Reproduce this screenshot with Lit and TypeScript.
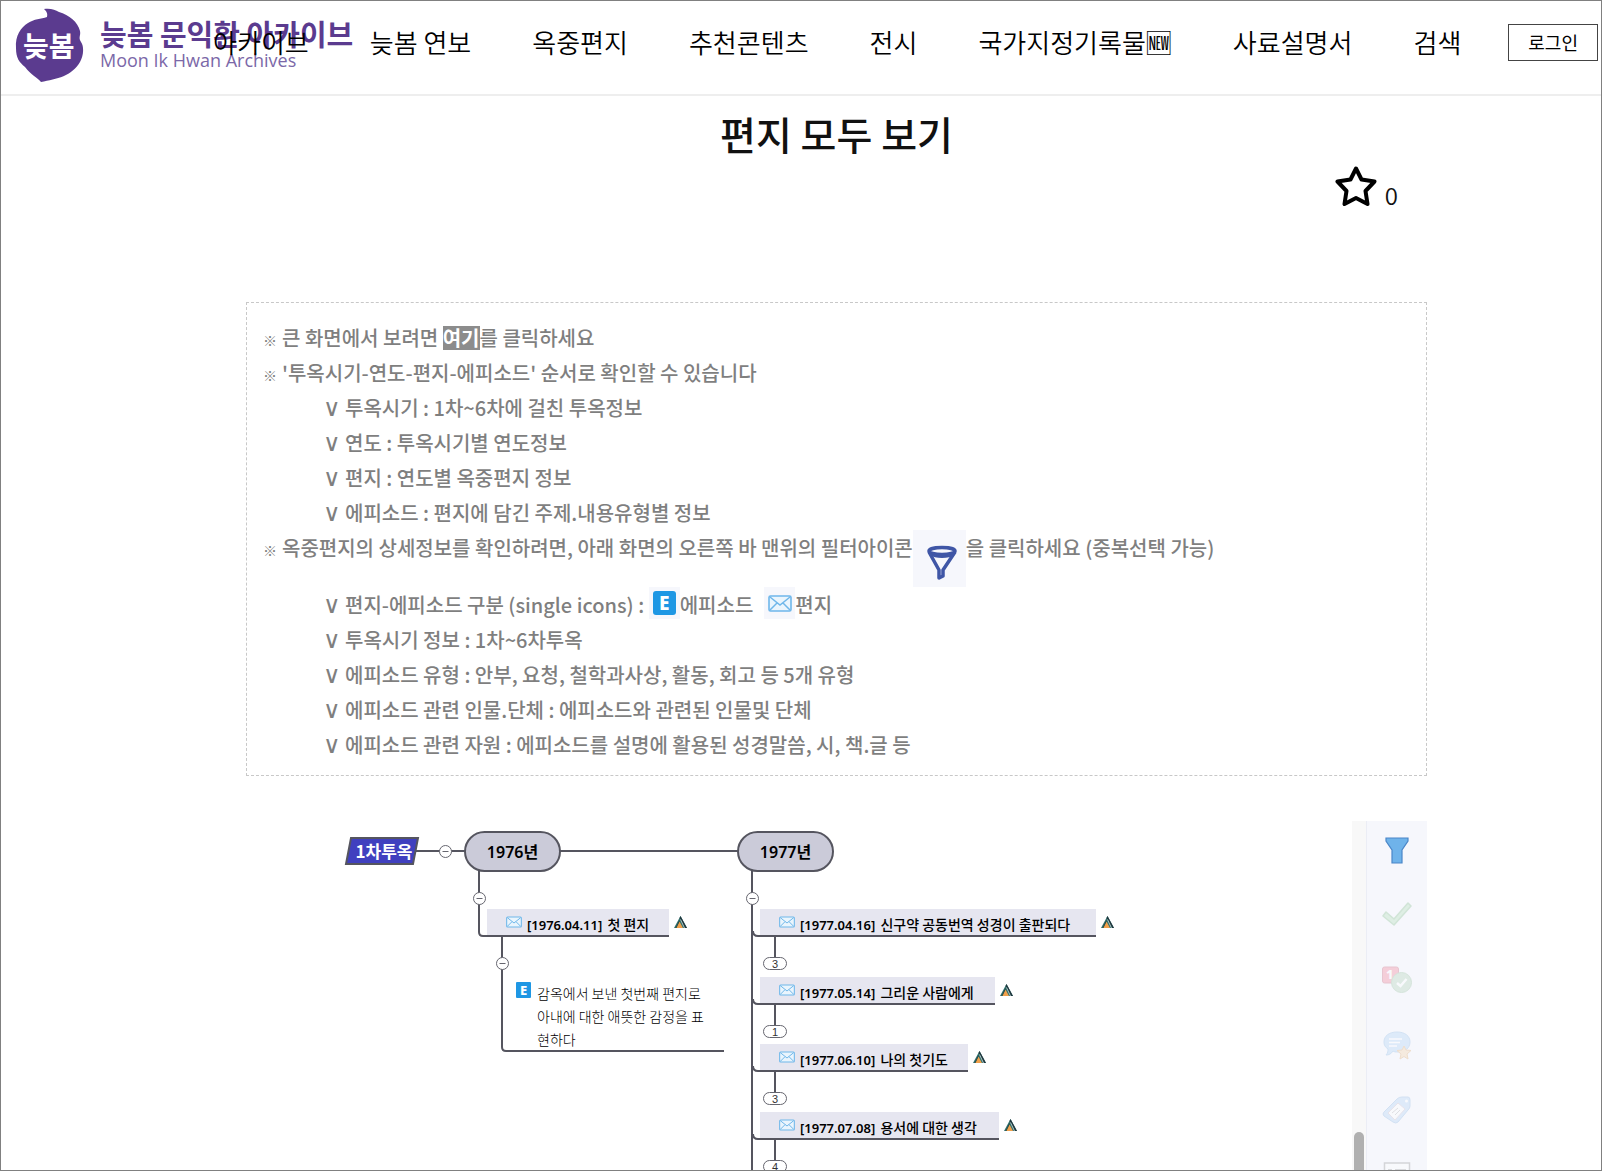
import { LitElement, html, css, svg } from "lit";
import { customElement, property } from "lit/decorators.js";
import { styleMap } from "lit/directives/style-map.js";

interface Letter {
  x: number;
  y: number;
  width: number;
  date: string;
  title: string;
  count?: number;
}

const MENU = ["아카이브", "늦봄 연보", "옥중편지", "추천콘텐츠", "전시", "국가지정기록물🆕", "사료설명서", "검색"];

const LETTERS: Letter[] = [
  { x: 241, y: 88, width: 182, date: "[1976.04.11]", title: "첫 편지" },
  { x: 514, y: 88, width: 336, date: "[1977.04.16]", title: "신구약 공동번역 성경이 출판되다", count: 3 },
  { x: 514, y: 156, width: 235, date: "[1977.05.14]", title: "그리운 사람에게", count: 1 },
  { x: 514, y: 223, width: 208, date: "[1977.06.10]", title: "나의 첫기도", count: 3 },
  { x: 514, y: 291, width: 239, date: "[1977.07.08]", title: "용서에 대한 생각", count: 4 },
];

const at = (x: number, y: number, width?: number) =>
  styleMap({ left: `${x}px`, top: `${y}px`, ...(width ? { width: `${width}px` } : {}) });

const envelope = html`<svg class="envelope" viewBox="0 0 24 17" aria-hidden="true">
  <rect x="1" y="1" width="22" height="15" rx="1.5" fill="#eaf5fd" stroke="#6fb7ea" stroke-width="1.6" />
  <path d="M2 2l10 8 10-8M2 15l7-7M22 15l-7-7" fill="none" stroke="#6fb7ea" stroke-width="1.5" />
</svg>`;

const letterE = html`<span class="e-tile">E</span>`;

const peaks = html`<svg class="peaks" viewBox="0 0 13 12" aria-hidden="true">
  <path d="M6.5 0L13 12H0z" fill="#2f6f6c" />
  <path d="M6.5 0L13 12h-2.500L5.500 2z" fill="#20383f" />
  <path d="M5.500 5.500L9 12H2z" fill="#f0a04b" />
  <path d="M6.500 3.500L10.500 12" stroke="#cfe3df" stroke-width=".8" fill="none" />
  <path d="M5.500 4.500L2 12" stroke="#244" stroke-width=".9" fill="none" />
</svg>`;

@customElement("site-header")
export class SiteHeader extends LitElement {
  static styles = css`
    :host {
      display: block;
      border-bottom: 2px solid #eeeeee;
    }
    .bar {
      display: grid;
      align-items: center;
      min-height: 83px;
      padding-bottom: 10px;
    }
    .logo,
    .nav {
      grid-area: 1 / 1;
    }
    .logo {
      display: flex;
      align-items: center;
      gap: 16px;
      padding: 4px 0 0 13px;
      justify-self: start;
      color: #5b3b8f;
      text-decoration: none;
    }
    .drop {
      width: 70px;
      height: 74px;
    }
    .drop-text {
      font-size: 28px;
      font-weight: 700;
      fill: #ffffff;
    }
    .words {
      display: flex;
      flex-direction: column;
    }
    .name {
      font-size: 29px;
      font-weight: 700;
      line-height: 30px;
    }
    .latin {
      font-family: "Open Sans", "Noto Sans", sans-serif;
      font-size: 18px;
      line-height: 24px;
      color: #7b68a8;
    }
    .nav {
      display: flex;
      align-items: center;
      justify-content: flex-end;
      padding-right: 3px;
    }
    .menu {
      display: flex;
      gap: 61px;
      margin: 0 47px 0 0;
      padding: 0 0 2px;
      list-style: none;
    }
    .menu-link {
      color: #000000;
      font-size: 26px;
      font-weight: 350;
      line-height: 36px;
      text-decoration: none;
      white-space: nowrap;
    }
    .login {
      padding: 0 19px;
      border: 1px solid #444444;
      background: #ffffff;
      color: #000000;
      font: inherit;
      font-size: 18px;
      line-height: 35px;
      white-space: nowrap;
    }
  `;

  render() {
    return html`<header class="bar">
      <a class="logo" href="#home" aria-label="늦봄 문익환 아카이브">
        <svg class="drop" viewBox="0 0 70 74">
          <path
            d="M33 9C34 5 32 3 30 1C37 0 41 2 45 4C55 7 64 14 66 23C67 28 64 29 67 34C70 38 70 47 66 54C58 68 43 71 27 74C23 69 17 67 11 59C5 54 2 50 2 40C1 28 7 19 14 15C20 11 27 11 33 9z"
            fill="#5b3b8f"
          />
          <text class="drop-text" x="9" y="49">늦봄</text>
        </svg>
        <span class="words">
          <span class="name">늦봄 문익환 아카이브</span>
          <span class="latin">Moon Ik Hwan Archives</span>
        </span>
      </a>
      <nav class="nav">
        <ul class="menu">
          ${MENU.map((label) => html`<li><a class="menu-link" href="#menu">${label}</a></li>`)}
        </ul>
        <button class="login" type="button">로그인</button>
      </nav>
    </header>`;
  }
}

@customElement("guide-box")
export class GuideBox extends LitElement {
  static styles = css`
    :host {
      display: block;
      padding: 17px 16px 13px;
      border: 1px dashed #c8c8c8;
      color: #7f7f7f;
      font-size: 20px;
      font-weight: 500;
      line-height: 35px;
    }
    .list {
      margin: 0;
      padding: 0;
      list-style: none;
    }
    .list .list {
      padding-left: 60px;
    }
    .mark {
      display: inline-block;
      width: 19px;
      font-size: 14px;
      line-height: 20px;
    }
    .tick {
      display: inline-block;
      width: 22px;
      font-family: "DejaVu Sans", sans-serif;
      font-size: 24px;
      font-weight: 400;
      line-height: 20px;
    }
    .here {
      background: #8c8c8c;
      color: #ffffff;
      font-weight: 700;
      line-height: 24px;
      display: inline-block;
      text-decoration: none;
    }
    .filter {
      width: 53px;
      height: 57px;
      vertical-align: top;
      background: #f6f7fc;
    }
    .chip {
      display: inline-flex;
      align-items: center;
      justify-content: center;
      width: 31px;
      height: 32px;
      vertical-align: text-bottom;
      background: #f6f7fc;
    }
    .envelope {
      width: 24px;
      height: 17px;
    }
    .e-tile {
      width: 23px;
      height: 24px;
      border-radius: 3px;
      background: #1e97e4;
      color: #ffffff;
      font-family: "Noto Sans", sans-serif;
      font-size: 19px;
      font-weight: 800;
      line-height: 24px;
      text-align: center;
    }
    .letter {
      margin-left: 11px;
    }
  `;

  private tick(text: unknown) {
    return html`<li><span class="tick">∨</span>${text}</li>`;
  }

  render() {
    return html`<ul class="list">
      <li><span class="mark">※</span>큰 화면에서 보려면 <a class="here" href="#wide">여기</a>를 클릭하세요</li>
      <li>
        <span class="mark">※</span>'투옥시기-연도-편지-에피소드' 순서로 확인할 수 있습니다
        <ul class="list">
          ${[
            "투옥시기 : 1차~6차에 걸친 투옥정보",
            "연도 : 투옥시기별 연도정보",
            "편지 : 연도별 옥중편지 정보",
            "에피소드 : 편지에 담긴 주제.내용유형별 정보",
          ].map((t) => this.tick(t))}
        </ul>
      </li>
      <li>
        <span class="mark">※</span>옥중편지의 상세정보를 확인하려면, 아래 화면의 오른쪽 바 맨위의 필터아이콘<svg
          class="filter"
          viewBox="0 0 53 57"
          aria-hidden="true"
        >
          <g fill="none" stroke="#3f56a6" stroke-width="3.500" stroke-linejoin="round">
            <ellipse cx="29" cy="21" rx="13" ry="3.500" />
            <path d="M16 22l10 18v8l4-2v-6l12-18" />
          </g>
          <path d="M17 24c6 4 18 4 24 0" fill="none" stroke="#3f56a6" stroke-width="2" /></svg
        >을 클릭하세요 (중복선택 가능)
        <ul class="list">
          ${this.tick(
            html`편지-에피소드 구분 (single icons) : <span class="chip">${letterE}</span>에피소드<span class="chip letter"
                >${envelope}</span
              >편지`,
          )}
          ${[
            "투옥시기 정보 : 1차~6차투옥",
            "에피소드 유형 : 안부, 요청, 철학과사상, 활동, 회고 등 5개 유형",
            "에피소드 관련 인물.단체 : 에피소드와 관련된 인물및 단체",
            "에피소드 관련 자원 : 에피소드를 설명에 활용된 성경말씀, 시, 책.글 등",
          ].map((t) => this.tick(t))}
        </ul>
      </li>
    </ul>`;
  }
}

@customElement("letter-map")
export class LetterMap extends LitElement {
  @property({ attribute: false }) letters: Letter[] = LETTERS;

  static styles = css`
    :host {
      display: block;
      position: relative;
      overflow: hidden;
      color: #000000;
    }
    .lines {
      position: absolute;
      inset: 0;
      width: 100%;
      height: 100%;
    }
    .root,
    .year,
    .node,
    .episode,
    .count {
      position: absolute;
    }
    .root {
      color: #ffffff;
      font-size: 17px;
      font-weight: 700;
      line-height: 26px;
      text-align: center;
    }
    .year {
      box-sizing: border-box;
      height: 41px;
      border: 2px solid #55555f;
      border-radius: 21px;
      background: #cbcbd9;
      font-family: "Noto Sans", "Noto Sans CJK KR", sans-serif;
      font-size: 16px;
      font-weight: 600;
      line-height: 39px;
      text-align: center;
    }
    .node {
      box-sizing: border-box;
      display: flex;
      align-items: center;
      gap: 5px;
      height: 28px;
      padding-left: 19px;
      border-bottom: 2px solid #55555f;
      background: #e6e6f0;
      font-size: 14px;
      font-weight: 500;
      line-height: 26px;
      white-space: nowrap;
    }
    .caption {
      padding-top: 5px;
    }
    .date {
      margin-right: 2px;
      font-family: "Noto Sans", sans-serif;
      font-size: 13px;
      font-weight: 600;
    }
    .envelope {
      flex: none;
      width: 16px;
      height: 12px;
    }
    .peaks {
      position: absolute;
      left: calc(100% + 5px);
      top: 7px;
      width: 13px;
      height: 12px;
    }
    .count {
      box-sizing: border-box;
      width: 24px;
      height: 13px;
      border: 1px solid #66666f;
      border-radius: 7px;
      background: #ffffff;
      color: #333333;
      font-family: "Liberation Sans", sans-serif;
      font-size: 11px;
      line-height: 12px;
      text-align: center;
    }
    .episode {
      display: flex;
      gap: 6px;
      font-size: 14px;
      font-weight: 300;
      line-height: 23px;
      word-break: break-all;
    }
    .e-tile {
      flex: none;
      width: 15px;
      height: 16px;
      border-radius: 1px;
      background: #1e97e4;
      color: #ffffff;
      font-family: "Noto Sans", sans-serif;
      font-size: 13px;
      font-weight: 800;
      line-height: 16px;
      text-align: center;
    }
  `;

  private toggle(cx: number, cy: number) {
    return svg`<circle cx=${cx} cy=${cy} r="6" fill="#fff" stroke="#66666f" />
      <path d="M${cx - 3} ${cy}h6" stroke="#66666f" />`;
  }

  render() {
    const right = this.letters.filter((l) => l.count);
    return html`<svg class="lines" aria-hidden="true">
        <g fill="none" stroke="#55555f" stroke-width="2">
          <path d="M168 30H220M312 30H492" />
          <path d="M233 50V111q0 4 4 4h6" />
          <path d="M256 115V226q0 4 4 4H478" />
          <path d="M506 50V1200" />
          ${right.map((l) => svg`<path d="M507 ${l.y + 22}q0 5 5 5h4M529 ${l.y + 27}v22" />`)}
        </g>
        <path d="M105 17H172L167 43H100z" fill="#4040bf" stroke="#55555f" stroke-width="2" />
        ${this.toggle(199.5, 30.5)} ${this.toggle(233.5, 77.5)} ${this.toggle(506.5, 77.5)}
        ${this.toggle(256.5, 142.5)}
      </svg>
      <div class="root" style=${at(103, 17, 70)}>1차투옥</div>
      <div class="year" style=${at(218, 10, 97)}>1976년</div>
      <div class="year" style=${at(491, 10, 97)}>1977년</div>
      ${this.letters.map(
        (l) => html`<div class="node" style=${at(l.x, l.y, l.width)}>
            ${envelope}
            <span class="caption"><span class="date">${l.date}</span> ${l.title}</span>
            ${peaks}
          </div>
          ${l.count ? html`<div class="count" style=${at(l.x + 3, l.y + 48)}>${l.count}</div>` : ""}`,
      )}
      <div class="episode" style=${at(270, 161, 197)}>${letterE}<span>감옥에서 보낸 첫번째 편지로 아내에 대한 애뜻한 감정을 표현하다</span></div>`;
  }
}

@customElement("map-tools")
export class MapTools extends LitElement {
  static styles = css`
    :host {
      display: flex;
      overflow: hidden;
    }
    .track {
      display: flex;
      align-items: flex-end;
      justify-content: center;
      width: 14px;
      border-right: 1px solid #ebedf5;
      background: #f8f8f8;
    }
    .thumb {
      width: 10px;
      height: 38px;
      border-radius: 5px 5px 0 0;
      background: #b0b0b0;
    }
    .tools {
      display: flex;
      flex-direction: column;
      align-items: center;
      gap: 33px;
      width: 60px;
      padding-top: 13px;
      background: #f6f7fc;
    }
    .tool {
      flex: none;
      width: 32px;
      height: 32px;
      padding: 0;
      border: 0;
      background: none;
    }
    .tool:disabled {
      opacity: 0.3;
    }
    .glyph {
      display: block;
      width: 32px;
      height: 32px;
    }
    .badge {
      font-family: "Noto Sans", sans-serif;
      font-size: 13px;
      font-weight: 800;
      fill: #ffffff;
    }
  `;

  render() {
    const icons: [string, unknown][] = [
      [
        "필터",
        svg`<path d="M5 4H27V7L21 16V29H11V16L5 7z" fill="#6fb3ea" stroke="#4a86c8" stroke-width="1.200" />`,
      ],
      [
        "진행",
        svg`<path d="M2 17L5 13L13 20L27 4L30 7L13 26z" fill="#a9dcae" stroke="#7dbb84" stroke-width="1.500" stroke-linejoin="round" />`,
      ],
      [
        "아이콘",
        svg`<rect x="1.500" y="3" width="16" height="16" rx="2" fill="#f0718a" stroke="#c8566c" />
          <text class="badge" x="5" y="15">1</text>
          <circle cx="20.500" cy="18.500" r="10" fill="#a9cfae" stroke="#8ab890" />
          <path d="M16 19l3.500 3 6-7" fill="none" stroke="#fff" stroke-width="2.500" />`,
      ],
      [
        "댓글",
        svg`<path d="M16 3C24 3 29 7 29 13S24 23 17 23C15 23 13 23 12 22C10 25 8 26 5 26C7 24 7 22 7 20C4 18 3 16 3 13C3 7 8 3 16 3z" fill="#a5cff5" stroke="#82b4e2" />
          <path d="M8 10h13M8 13.500h11M8 17h8" stroke="#fff" stroke-width="1.500" />
          <path d="M23 17l2 4 5 .5-4 3.500 1 5-4-2.500-4 2.500 1-5-4-3.500 5-.5z" fill="#f5cf9a" stroke="#dda562" />`,
      ],
      [
        "태그",
        svg`<path d="M3 18L16 5Q18 3 21 3H27Q29 3 29 6V12Q29 14 27 16L17 28Q15 30 12 28L3 22Q1 20 3 18z" fill="#a9cff5" stroke="#82b0e0" />
          <path d="M7 19l10-10 7 6-10 11z" fill="#fff" stroke="#c9b8c4" />
          <path d="M11 19l6-5M14 21l5-5" stroke="#aaa" />
          <circle cx="25.500" cy="7" r="1.500" fill="#fff" />`,
      ],
      [
        "표",
        svg`<rect x="3.500" y="4" width="25" height="24" fill="#fff" stroke="#888" stroke-width="1.500" />
          <path d="M7 10h4v3H7zM14 10h11v3H14zM7 16h4v3H7zM14 16h11v3H14z" fill="#999" />`,
      ],
    ];
    return html`<div class="track"><div class="thumb"></div></div>
      <div class="tools">
        ${icons.map(
          ([label, body], i) => html`<button class="tool" type="button" aria-label=${label} ?disabled=${i > 0}>
            <svg class="glyph" viewBox="0 0 32 32">${body}</svg>
          </button>`,
        )}
      </div>`;
  }
}

@customElement("app-root")
export class AppRoot extends LitElement {
  static styles = css`
    :host {
      display: flex;
      flex-direction: column;
      box-sizing: border-box;
      height: 100vh;
      overflow: hidden;
      border: 1px solid #808080;
      background: #ffffff;
      color: #111111;
      font-family: "Noto Sans CJK KR", "Noto Sans", sans-serif;
    }
    .page {
      flex: 1;
      display: flex;
      flex-direction: column;
      min-height: 0;
      padding: 9px 174px 0 245px;
    }
    .title {
      margin: 0;
      font-size: 39px;
      font-weight: 500;
      line-height: 56px;
      text-align: center;
    }
    .favorite {
      display: flex;
      justify-content: flex-end;
      align-items: flex-end;
      gap: 8px;
      height: 46px;
      margin-bottom: 95px;
      padding-right: 29px;
    }
    .star-button {
      padding: 0;
      border: 0;
      background: none;
    }
    .star {
      display: block;
      width: 42px;
      height: 41px;
    }
    .total {
      font-size: 24px;
      font-weight: 350;
      line-height: 24px;
    }
    .viewer {
      flex: 1;
      display: flex;
      min-height: 0;
      margin-top: 45px;
    }
    .map {
      flex: 1;
    }
  `;

  render() {
    return html`<site-header></site-header>
      <main class="page">
        <h1 class="title">편지 모두 보기</h1>
        <div class="favorite">
          <button class="star-button" type="button" aria-label="즐겨찾기">
            <svg class="star" viewBox="0 0 42 41">
              <path
                d="M21 2.500L26.500 13.500L39.500 15.500L30.500 25L32.500 38L21 32L9.500 38L11.500 25L2.500 15.500L15.500 13.500z"
                fill="none"
                stroke="#000"
                stroke-width="4"
                stroke-linejoin="round"
              />
            </svg>
          </button>
          <span class="total">0</span>
        </div>
        <guide-box></guide-box>
        <div class="viewer">
          <letter-map class="map"></letter-map>
          <map-tools></map-tools>
        </div>
      </main>`;
  }
}
